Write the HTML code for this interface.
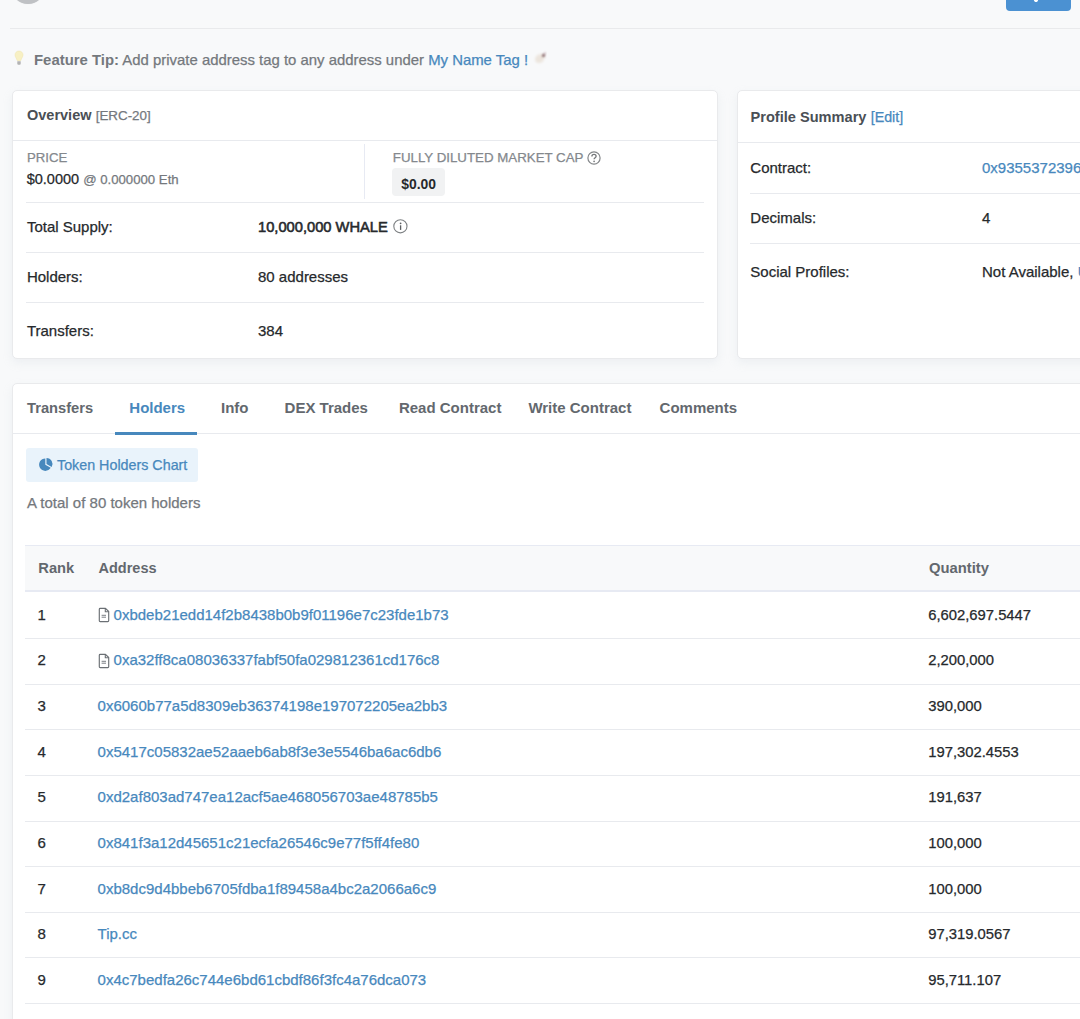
<!DOCTYPE html>
<html><head><meta charset="utf-8">
<style>
html,body{margin:0;padding:0;}
body{width:1080px;height:1019px;overflow:hidden;background:#f8f9fa;position:relative;font-family:"Liberation Sans",sans-serif;color:#26292c;font-size:15px;}
.a{position:absolute;}
.t{position:absolute;white-space:nowrap;line-height:20px;-webkit-text-stroke:0.25px currentColor;}
.b{font-weight:bold;-webkit-text-stroke:0;}
.tb{color:#63686e;}
.g{color:#74787d;}
.l{color:#4788bd;}
.card{position:absolute;background:#fff;border:1px solid #e9eaec;border-radius:5px;box-shadow:0 4px 10px rgba(189,197,209,.18);box-sizing:border-box;}
.hr{position:absolute;height:1px;background:#e8eaee;}
</style></head><body>
<!-- top -->
<div class="a" style="left:10.5px;top:-30px;width:34px;height:34px;border-radius:50%;background:#bfc1c4;box-shadow:0 0 1px rgba(0,0,0,.1)"></div>
<div class="a" style="left:1006px;top:-30px;width:65px;height:41px;border-radius:4px;background:#4b91d2;"></div><div class="a" style="left:1034px;top:-2px;width:4px;height:4px;border-radius:2px;background:#fff;transform:rotate(45deg)"></div>
<div class="a" style="left:10px;top:28px;width:1070px;height:1.3px;background:#e9eaec;"></div>

<!-- feature tip -->
<svg class="a" style="left:14px;top:50px" width="10" height="17" viewBox="0 0 10 17"><path d="M5 1C2.6 1 1 2.8 1 4.9c0 2 1.7 3.4 2.1 5.6h3.8C7.3 8.3 9 6.9 9 4.9 9 2.8 7.4 1 5 1z" fill="#f7f0c4" stroke="#efe3a8" stroke-width=".5"/><path d="M3.3 11.2h3.4v2.6a1 1 0 0 1-1 1H4.3a1 1 0 0 1-1-1z" fill="#b3b3b3"/></svg>
<div class="t g" style="left:34px;top:49.7px;font-size:14.92px;"><span class="b">Feature Tip:</span> Add private address tag to any address under <span class="l">My Name Tag !</span></div>
<svg class="a" style="left:532px;top:49px" width="22" height="20" viewBox="0 0 22 20"><defs><filter id="bl" x="-50%" y="-50%" width="200%" height="200%"><feGaussianBlur stdDeviation="1"/></filter></defs><ellipse cx="7.7" cy="9.6" rx="5" ry="4.2" transform="rotate(-40 7.7 9.6)" fill="#ece5dd" filter="url(#bl)"/><path d="M11.5 6.6L13.4 3.5" stroke="#b59aa0" stroke-width="1.2" filter="url(#bl)"/><circle cx="11.5" cy="6.6" r="1.5" fill="#7d5a5c" filter="url(#bl)"/></svg>

<!-- overview card -->
<div class="card" style="left:12px;top:90px;width:706px;height:269px;"></div>
<div class="t" style="left:27px;top:105px;"><span class="b" style="color:#4a4f55;font-size:14.5px">Overview</span> <span class="g" style="font-size:13.4px">[ERC-20]</span></div>
<div class="hr" style="left:13px;top:140px;width:704px;"></div>
<div class="t g" style="left:27px;top:148px;font-size:13.2px;color:#84888d">PRICE</div>
<div class="t" style="left:26.7px;top:169px;font-size:14.5px;">$0.0000 <span class="g" style="font-size:13.2px">@ 0.000000 Eth</span></div>
<div class="a" style="left:364px;top:144px;width:1px;height:55px;background:#e7eaf3;"></div>
<div class="t g" style="left:392.8px;top:148px;font-size:13.3px;color:#84888d">FULLY DILUTED MARKET CAP</div>
<svg class="a" style="left:587.4px;top:150.6px" width="14" height="14" viewBox="0 0 14 14"><circle cx="7" cy="7" r="6.1" fill="none" stroke="#838689" stroke-width="1.2"/><path d="M4.9 5.4c0-1.3 1-2 2.1-2s2.1.7 2.1 1.9c0 1.4-2 1.5-2 3" fill="none" stroke="#75787b" stroke-width="1.35"/><circle cx="7.1" cy="10.3" r=".85" fill="#75787b"/></svg>
<div class="a" style="left:392px;top:168px;width:53px;height:28px;border-radius:4px;background:#f1f2f3;"></div>
<div class="t b" style="left:401.3px;top:173.8px;font-size:13.9px;">$0.00</div>
<div class="hr" style="left:26px;top:202px;width:678px;"></div>
<div class="t" style="left:26.9px;top:217px;">Total Supply:</div>
<div class="t" style="left:258px;top:217px;font-size:14.7px;-webkit-text-stroke:0.55px currentColor;">10,000,000 WHALE</div>
<svg class="a" style="left:393px;top:219px" width="15" height="15" viewBox="0 0 15 15"><circle cx="7.4" cy="7.3" r="6.6" fill="none" stroke="#7d8083" stroke-width="1.1"/><circle cx="7.6" cy="4.3" r=".9" fill="#5b5e61"/><path d="M7.6 6.3v4.6" fill="none" stroke="#5b5e61" stroke-width="1.3"/></svg>
<div class="hr" style="left:26px;top:252px;width:678px;"></div>
<div class="t" style="left:26.9px;top:267px;">Holders:</div>
<div class="t" style="left:258px;top:267px;">80 addresses</div>
<div class="hr" style="left:26px;top:302px;width:678px;"></div>
<div class="t" style="left:26.9px;top:321px;">Transfers:</div>
<div class="t" style="left:258px;top:321px;">384</div>

<!-- profile card -->
<div class="card" style="left:737px;top:90px;width:400px;height:269px;"></div>
<div class="t" style="left:750.5px;top:107px;"><span class="b" style="color:#4a4f55;font-size:14.6px">Profile Summary</span> <span class="l" style="font-size:14.3px">[Edit]</span></div>
<div class="hr" style="left:738px;top:142px;width:342px;"></div>
<div class="t" style="left:750.3px;top:158px;">Contract:</div>
<div class="t l" style="left:982px;top:158px;">0x9355372396e3f6daf13359b7b607a3374cc638e0</div>
<div class="hr" style="left:750px;top:193px;width:330px;"></div>
<div class="t" style="left:750.3px;top:208px;">Decimals:</div>
<div class="t" style="left:982px;top:208px;">4</div>
<div class="hr" style="left:750px;top:243px;width:330px;"></div>
<div class="t" style="left:750.3px;top:261.5px;">Social Profiles:</div>
<div class="t" style="left:982px;top:261.5px;">Not Available, <span class="l">Update?</span></div>

<!-- tabs card -->
<div class="card" style="left:12px;top:383px;width:1100px;height:700px;"></div>
<div class="hr" style="left:13px;top:433px;width:1067px;"></div>
<div class="t b tb" style="left:27px;top:398px;font-size:14.7px;">Transfers</div>
<div class="t b l" style="left:129.3px;top:398px;font-size:15px;">Holders</div>
<div class="t b tb" style="left:221px;top:398px;font-size:15px;">Info</div>
<div class="t b tb" style="left:284.6px;top:398px;font-size:15px;">DEX Trades</div>
<div class="t b tb" style="left:398.9px;top:398px;font-size:15px;">Read Contract</div>
<div class="t b tb" style="left:528.4px;top:398px;font-size:15px;">Write Contract</div>
<div class="t b tb" style="left:659.6px;top:398px;font-size:15px;">Comments</div>
<div class="a" style="left:115px;top:431.5px;width:82.4px;height:3px;background:#4788bd;"></div>

<div class="a" style="left:26px;top:448px;width:172px;height:34px;border-radius:3px;background:#e9f3fb;"></div>
<svg class="a" style="left:38.6px;top:457.6px;overflow:visible" width="14" height="13" viewBox="0 0 14 13"><path d="M6.3 6.7V0.5A6.2 6.2 0 1 0 11.67 9.8Z" fill="#4788bd"/><path d="M7.5 5.9V-0.1A6 6 0 0 1 12.7 8.9Z" fill="#4788bd"/></svg>
<div class="t l" style="left:57px;top:455px;font-size:14.3px;">Token Holders Chart</div>
<div class="t g" style="left:27px;top:493px;">A total of 80 token holders</div>

<!-- table -->
<div class="a" style="left:25px;top:545px;width:1055px;height:47px;background:#f8f9fa;border-top:1px solid #e7eaf3;border-bottom:2px solid #e7eaf3;box-sizing:border-box;"></div>
<div class="t b tb" style="left:38.3px;top:558px;font-size:14.7px;">Rank</div>
<div class="t b tb" style="left:98.5px;top:558px;font-size:14.5px;">Address</div>
<div class="t b tb" style="left:928.9px;top:558px;font-size:14.8px;">Quantity</div>
<!--ROWS--><div class="t" style="left:37.6px;top:604.70px;">1</div>
<svg class="a" style="left:97.6px;top:607.00px" width="12" height="16" viewBox="0 0 12 16"><path d="M1.3 2.2a.9 .9 0 0 1 .9-.9h5.3l3.2 3.2v9.2a.9 .9 0 0 1-.9 .9H2.2a.9 .9 0 0 1-.9-.9z" fill="none" stroke="#6b7075" stroke-width="1.15" stroke-linejoin="round"/><path d="M7.3 1.4v3.4h3.3" fill="none" stroke="#6b7075" stroke-width="1.1"/><path d="M3.6 8.3h4.4M3.6 10.2h4.4" stroke="#7a7f84" stroke-width="1"/></svg>
<div class="t l" style="left:113.6px;top:604.70px;">0xbdeb21edd14f2b8438b0b9f01196e7c23fde1b73</div>
<div class="t" style="left:928.2px;top:604.70px;font-size:14.8px">6,602,697.5447</div>
<div class="hr" style="left:25px;top:637.9px;width:1055px;"></div>
<div class="t" style="left:37.6px;top:650.38px;">2</div>
<svg class="a" style="left:97.6px;top:652.68px" width="12" height="16" viewBox="0 0 12 16"><path d="M1.3 2.2a.9 .9 0 0 1 .9-.9h5.3l3.2 3.2v9.2a.9 .9 0 0 1-.9 .9H2.2a.9 .9 0 0 1-.9-.9z" fill="none" stroke="#6b7075" stroke-width="1.15" stroke-linejoin="round"/><path d="M7.3 1.4v3.4h3.3" fill="none" stroke="#6b7075" stroke-width="1.1"/><path d="M3.6 8.3h4.4M3.6 10.2h4.4" stroke="#7a7f84" stroke-width="1"/></svg>
<div class="t l" style="left:113.6px;top:650.38px;">0xa32ff8ca08036337fabf50fa029812361cd176c8</div>
<div class="t" style="left:928.2px;top:650.38px;font-size:14.8px">2,200,000</div>
<div class="hr" style="left:25px;top:683.5px;width:1055px;"></div>
<div class="t" style="left:37.6px;top:696.06px;">3</div>
<div class="t l" style="left:97.6px;top:696.06px;">0x6060b77a5d8309eb36374198e197072205ea2bb3</div>
<div class="t" style="left:928.2px;top:696.06px;font-size:14.8px">390,000</div>
<div class="hr" style="left:25px;top:729.2px;width:1055px;"></div>
<div class="t" style="left:37.6px;top:741.74px;">4</div>
<div class="t l" style="left:97.6px;top:741.74px;">0x5417c05832ae52aaeb6ab8f3e3e5546ba6ac6db6</div>
<div class="t" style="left:928.2px;top:741.74px;font-size:14.8px">197,302.4553</div>
<div class="hr" style="left:25px;top:774.8px;width:1055px;"></div>
<div class="t" style="left:37.6px;top:787.42px;">5</div>
<div class="t l" style="left:97.6px;top:787.42px;">0xd2af803ad747ea12acf5ae468056703ae48785b5</div>
<div class="t" style="left:928.2px;top:787.42px;font-size:14.8px">191,637</div>
<div class="hr" style="left:25px;top:820.5px;width:1055px;"></div>
<div class="t" style="left:37.6px;top:833.10px;">6</div>
<div class="t l" style="left:97.6px;top:833.10px;">0x841f3a12d45651c21ecfa26546c9e77f5ff4fe80</div>
<div class="t" style="left:928.2px;top:833.10px;font-size:14.8px">100,000</div>
<div class="hr" style="left:25px;top:866.1px;width:1055px;"></div>
<div class="t" style="left:37.6px;top:878.78px;">7</div>
<div class="t l" style="left:97.6px;top:878.78px;">0xb8dc9d4bbeb6705fdba1f89458a4bc2a2066a6c9</div>
<div class="t" style="left:928.2px;top:878.78px;font-size:14.8px">100,000</div>
<div class="hr" style="left:25px;top:911.7px;width:1055px;"></div>
<div class="t" style="left:37.6px;top:924.46px;">8</div>
<div class="t l" style="left:97.6px;top:924.46px;">Tip.cc</div>
<div class="t" style="left:928.2px;top:924.46px;font-size:14.8px">97,319.0567</div>
<div class="hr" style="left:25px;top:957.4px;width:1055px;"></div>
<div class="t" style="left:37.6px;top:970.14px;">9</div>
<div class="t l" style="left:97.6px;top:970.14px;">0x4c7bedfa26c744e6bd61cbdf86f3fc4a76dca073</div>
<div class="t" style="left:928.2px;top:970.14px;font-size:14.8px">95,711.107</div>
<div class="hr" style="left:25px;top:1003.0px;width:1055px;"></div>
<div class="t" style="left:37.6px;top:1015.82px;">10</div>
<div class="t l" style="left:97.6px;top:1015.82px;">0x2d3f5d3ebf0dc1c3b6b9d6a0c6e37f4d0f4a9d21</div>
<div class="t" style="left:928.2px;top:1015.82px;font-size:14.8px">94,000</div><!--/ROWS-->
</body></html>
